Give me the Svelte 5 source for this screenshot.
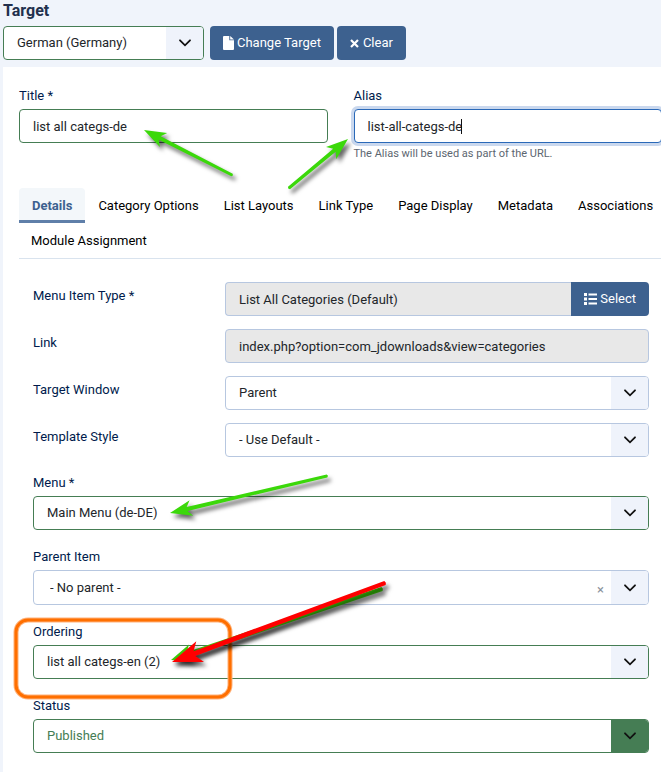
<script>
    let language = 'German (Germany)'
    let title = 'list all categs-de'
    let alias = 'list-all-categs-de'
    let activeTab = 'Details'

    const tabs = [
        'Details',
        'Category Options',
        'List Layouts',
        'Link Type',
        'Page Display',
        'Metadata',
        'Associations',
        'Module Assignment'
    ]

    const rowSelects = [
        { id: 'window', label: 'Target Window', value: 'Parent' },
        { id: 'template', label: 'Template Style', value: '- Use Default -' }
    ]

    const stackedSelects = [
        { id: 'menu', label: 'Menu *', value: 'Main Menu (de-DE)', kind: 'valid' },
        { id: 'parent', label: 'Parent Item', value: '- No parent -', kind: 'search' },
        { id: 'ordering', label: 'Ordering', value: 'list all categs-en (2)', kind: 'valid' },
        { id: 'status', label: 'Status', value: 'Published', kind: 'valid published' }
    ]

    // arrows run from the tail to the tip
    const arrows = [
        { tail: [232, 175], tip: [144, 130], head: 22, half: 8, width: 3, color: '#3bd80a' },
        { tail: [289, 188], tip: [348, 139], head: 22, half: 8, width: 3, color: '#3bd80a' },
        { tail: [327, 476], tip: [170, 513], head: 22, half: 8, width: 3, color: '#3bd80a' },
        { tail: [382, 589], tip: [171, 660], head: 22, half: 9, width: 4, color: '#3bc80a' },
        { tail: [385, 583], tip: [172, 662], head: 30, half: 11, width: 4, color: '#ff0000' }
    ]

    const arrowPath = ({ tail, tip, head, half, width }) => {
        const dx = tail[0] - tip[0]
        const dy = tail[1] - tip[1]
        const len = Math.hypot(dx, dy)
        const ux = dx / len
        const uy = dy / len
        const at = (along, side) =>
            `${(tip[0] + ux * along - uy * side).toFixed(1)} ${(tip[1] + uy * along + ux * side).toFixed(1)}`
        const neck = head * 0.8
        const thick = width / 2 + 0.5
        const thin = width / 2

        return `M${at(0, 0)}L${at(head, half)}L${at(neck, thick)}L${at(len, thin)}L${at(len + 1, 0)}L${at(len, -thin)}L${at(neck, -thick)}L${at(head, -half)}Z`
    }
</script>

{#snippet chevron()}
    <span class="toggle">
        <svg width="12" height="8" viewBox="0 0 12 8" fill="none" aria-hidden="true">
            <path d="M1 1.3L6 6.3L11 1.3" stroke="#111" stroke-width="1.8" stroke-linecap="round" />
        </svg>
    </span>
{/snippet}

<div class="page">
    <header class="target">
        <h1><label for="language">Target</label></h1>
        <div class="toolbar">
            <div class="select valid language">
                <select id="language" bind:value={language}>
                    <option>German (Germany)</option>
                </select>
                {@render chevron()}
            </div>
            <button class="btn change">
                <svg width="11" height="14" viewBox="0 0 11 14" fill="#fff" aria-hidden="true">
                    <path d="M1 0H6.3V4.2H11V13A1 1 0 0 1 10 14H1A1 1 0 0 1 0 13V1A1 1 0 0 1 1 0Z" />
                    <path d="M7.2 0L11 3.4H7.2Z" />
                </svg>
                Change Target
            </button>
            <button class="btn clear">
                <svg width="9" height="9" viewBox="0 0 9 9" fill="none" aria-hidden="true">
                    <path d="M1 1L8 8M8 1L1 8" stroke="#fff" stroke-width="2.2" />
                </svg>
                Clear
            </button>
        </div>
    </header>

    <main class="card">
        <div class="names">
            <div class="stack">
                <label for="title">Title *</label>
                <input id="title" class="control valid" type="text" bind:value={title}>
            </div>
            <div class="stack">
                <label for="alias">Alias</label>
                <input id="alias" class="control focused" type="text" aria-describedby="alias-help" bind:value={alias}>
                <small id="alias-help">The Alias will be used as part of the URL.</small>
            </div>
        </div>

        <div class="tabs" role="tablist">
            {#each tabs as tab}
                <button
                    role="tab"
                    class:active={activeTab === tab}
                    aria-selected={activeTab === tab}
                    on:click={() => activeTab = tab}
                >{tab}</button>
            {/each}
        </div>

        <section class="details">
            <div class="row">
                <label for="type">Menu Item Type *</label>
                <div class="group">
                    <input id="type" class="control" type="text" readonly value="List All Categories (Default)">
                    <button class="btn">
                        <svg width="13" height="12" viewBox="0 0 13 12" fill="#fff" aria-hidden="true">
                            <path d="M0 0H3V3H0ZM0 4.5H3V7.5H0ZM0 9H3V12H0ZM4.5 .5H13V2.4H4.5ZM4.5 5H13V6.9H4.5ZM4.5 9.5H13V11.4H4.5Z" />
                        </svg>
                        Select
                    </button>
                </div>
            </div>
            <div class="row">
                <label for="link">Link</label>
                <input id="link" class="control" type="text" readonly value="index.php?option=com_jdownloads&view=categories">
            </div>
            {#each rowSelects as { id, label, value }}
                <div class="row">
                    <label for={id}>{label}</label>
                    <div class="select">
                        <select {id}><option>{value}</option></select>
                        {@render chevron()}
                    </div>
                </div>
            {/each}

            <div class="fields">
                {#each stackedSelects as { id, label, value, kind }}
                    <div class="stack">
                        <label for={id}>{label}</label>
                        <div class="select {kind}">
                            <select {id}><option>{value}</option></select>
                            {#if kind === 'search'}
                                <button class="remove">×</button>
                            {/if}
                            {@render chevron()}
                        </div>
                    </div>
                {/each}
            </div>
        </section>
    </main>

    <svg class="notes" width="661" height="772" viewBox="0 0 661 772" fill="none" aria-hidden="true">
        <path d="M461.5 119V134" stroke="#111" stroke-width="1" />
        <rect x="16" y="620" width="214" height="77" rx="12" stroke="#ffb27a" stroke-width="5" />
        <rect x="16" y="620" width="214" height="77" rx="12" stroke="#ff6f00" stroke-width="3" />
        {#each arrows as arrow}
            <path class="arrow" d={arrowPath(arrow)} fill={arrow.color} />
        {/each}
    </svg>
</div>

<style>
    :global(body) {
        background: #f0f4fb;
    }

    .page {
        position: relative;
        display: flex;
        flex-direction: column;
        min-height: 100vh;
        overflow-x: clip;
        font-family: Roboto, 'Liberation Sans', sans-serif;
        font-size: 13px;
        line-height: 20px;
        color: #22262a;
    }

    .page * {
        box-sizing: border-box;
    }

    button,
    input,
    select {
        margin: 0;
        font: inherit;
        color: inherit;
    }

    label {
        color: #001b4c;
    }

    .target {
        padding: 0 3px 7px;
    }

    h1 {
        margin: 0 0 5px;
        padding-top: 1px;
        font-size: 16px;
        font-weight: 700;
        line-height: 20px;
    }

    h1 label {
        color: #22304d;
    }

    .toolbar {
        display: flex;
        gap: 3px;
    }

    .btn {
        display: flex;
        align-items: center;
        gap: 3px;
        height: 34px;
        padding: 0 13px;
        border: none;
        border-radius: 4px;
        background: #3d618f;
        color: #fff;
        white-space: nowrap;
        cursor: pointer;
    }

    .clear {
        gap: 4px;
    }

    .card {
        flex: 1;
        margin-left: 3px;
        padding: 19px 0 18px 16px;
        background: #fff;
    }

    .names {
        display: grid;
        grid-template-columns: 1fr 1fr;
        gap: 26px;
        margin-right: -1px;
    }

    .stack {
        display: flex;
        flex-direction: column;
        gap: 3px;
    }

    .control,
    .select {
        width: 100%;
        height: 34px;
        border: 1px solid #b7c7e0;
        border-radius: 4px;
        background: #fff;
    }

    .control {
        padding: 1px 13px 0;
        outline: none;
    }

    .control[readonly] {
        background: #e8e8e8;
    }

    .control.valid,
    .select.valid {
        border-color: #457d54;
    }

    .control.focused {
        border-color: #2a69b8;
        box-shadow: 0 0 0 3px #cad8ee;
    }

    small {
        margin-top: -2px;
        font-size: 11px;
        color: #5c6670;
    }

    .tabs {
        display: flex;
        flex-wrap: wrap;
        column-gap: 1px;
        margin: 24px -8px 0 0;
        border-bottom: 1px solid #d9e3ee;
    }

    .tabs button {
        height: 35px;
        padding: 3px 12px 0;
        border: none;
        border-bottom: 3px solid transparent;
        border-radius: 4px 4px 0 0;
        background: none;
        color: #000;
        cursor: pointer;
    }

    .tabs .active {
        padding: 3px 13px 0;
        border-color: #5f7fa9;
        background: #f3f7fa;
        font-weight: 700;
        color: #3d618f;
    }

    .details {
        padding: 23px 12px 0 14px;
    }

    .row {
        display: grid;
        grid-template-columns: 192px 1fr;
        margin-bottom: 13px;
    }

    .row label {
        padding-top: 4px;
    }

    .group {
        display: flex;
    }

    .group .control {
        flex: 1;
        min-width: 0;
        border-right: none;
        border-radius: 4px 0 0 4px;
    }

    .group .btn {
        border-radius: 0 4px 4px 0;
    }

    .fields {
        display: grid;
        gap: 17px;
        margin-top: 16px;
    }

    .select {
        position: relative;
        overflow: hidden;
    }

    .select.language {
        width: 201px;
        margin-right: 3px;
    }

    select {
        width: 100%;
        height: 100%;
        padding: 0 40px 0 13px;
        border: none;
        outline: none;
        background: none;
        appearance: none;
    }

    .toggle {
        position: absolute;
        inset: 0 0 0 auto;
        display: grid;
        place-items: center;
        width: 37px;
        background: #eff3fb;
        pointer-events: none;
    }

    .select.search {
        height: 35px;
    }

    .search select {
        padding-left: 16px;
    }

    .remove {
        position: absolute;
        top: 9px;
        right: 44px;
        padding: 0;
        border: none;
        background: none;
        color: #8a939c;
        cursor: pointer;
    }

    .published {
        color: #457d54;
    }

    .published .toggle {
        background: #457d54;
    }

    .notes {
        position: absolute;
        top: 0;
        left: 0;
        pointer-events: none;
    }

    .arrow {
        filter: drop-shadow(3px 4px 2px rgba(0, 0, 0, 0.6));
    }
</style>
